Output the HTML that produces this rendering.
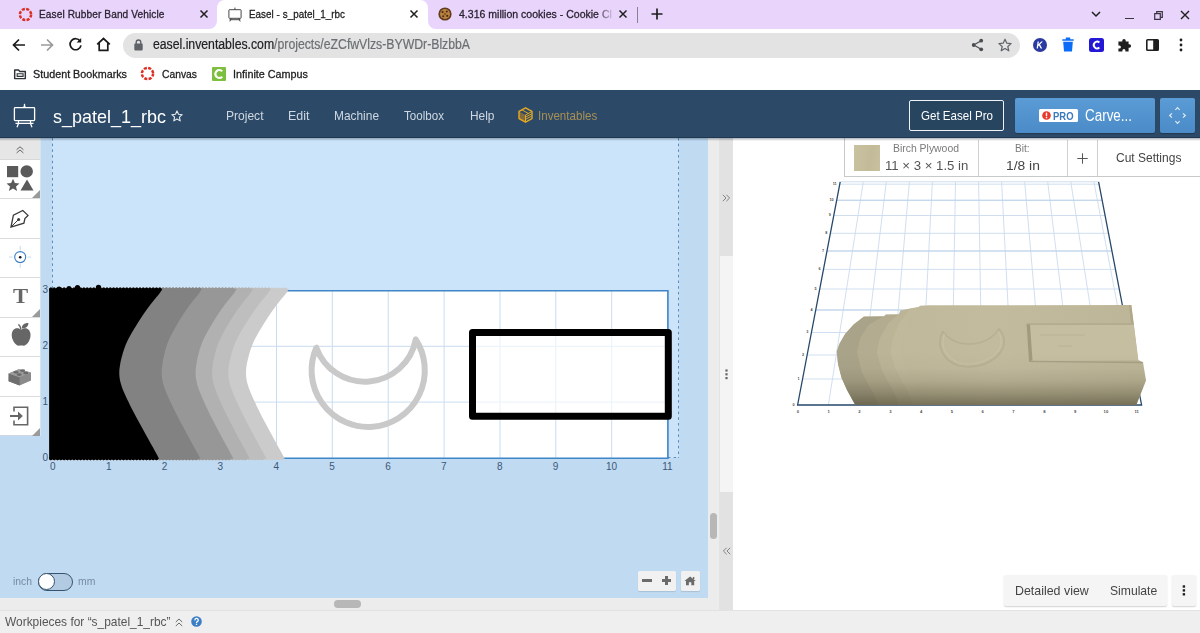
<!DOCTYPE html>
<html>
<head>
<meta charset="utf-8">
<title>Easel - s_patel_1_rbc</title>
<style>
*{box-sizing:border-box;margin:0;padding:0}
html,body{width:1200px;height:633px;overflow:hidden;background:#fff}
body{font-family:"Liberation Sans",sans-serif;position:relative;color:#222}
.abs{position:absolute}
.t{position:absolute;white-space:nowrap;line-height:1;transform-origin:0 0}
svg{position:absolute;overflow:visible}
/* chrome */
#tabstrip{left:0;top:0;width:1200px;height:29px;background:#e9d5fc}
#acttab{left:217px;top:0;width:211px;height:30px;background:#fff;border-radius:8px 8px 0 0}
#toolbar{left:0;top:29px;width:1200px;height:61px;background:#fff}
#omni{left:123px;top:33px;width:897px;height:25px;background:#e3e3e4;border-radius:13px}
/* app */
#hdr{left:0;top:90px;width:1200px;height:47.5px;background:#2c4a67;border-bottom:1px solid #1f3850}
#hdrsh{left:0;top:137.5px;width:1200px;height:3px;background:linear-gradient(rgba(20,40,60,0.35),rgba(20,40,60,0));z-index:5}
#work{left:0;top:138px;width:708px;height:460px;background:#c0daf1}
#inner{left:52px;top:138px;width:627px;height:320px;background:#cce4fa}
#lefttb{left:0;top:138px;width:40px;height:298px;background:#fff}
#vscroll{left:708px;top:138px;width:11px;height:460px;background:#ececec}
#hscroll{left:0;top:598px;width:720px;height:12.5px;background:#ececec}
#divider{left:719px;top:138px;width:13.9px;height:472px;background:#f4f4f4}
#right{left:732.9px;top:138px;width:467px;height:472px;background:#fff}
#bottom{left:0;top:610px;width:1200px;height:23px;background:#efefef;border-top:1px solid #e2e2e2}
.ax{font-size:10px;color:#3b5876}
</style>
</head>
<body>
<!-- ============ BROWSER CHROME ============ -->
<div id="tabstrip" class="abs"></div>
<div id="acttab" class="abs"></div>
<div id="toolbar" class="abs"></div>
<div id="omni" class="abs"></div>
<!-- tab 1 -->
<svg style="left:18px;top:7px" width="15" height="15" viewBox="0 0 15 15"><circle cx="7.5" cy="7.5" r="5.6" fill="none" stroke="#dc2e23" stroke-width="2.5" stroke-dasharray="3.05 1.35"/></svg>
<div class="t" id="tab1t" style="left:38.5px;-webkit-text-stroke:0.3px currentColor;top:8.5px;font-size:11.3px;color:#2a2230;letter-spacing:0.1px;transform:scaleX(0.8961)">Easel Rubber Band Vehicle</div>
<svg style="left:199px;top:9px" width="10" height="10" viewBox="0 0 10 10"><path d="M1.5 1.5L8.5 8.5M8.5 1.5L1.5 8.5" stroke="#1f1f1f" stroke-width="1.5" fill="none"/></svg>
<!-- active tab curves -->
<svg style="left:209px;top:21px" width="8" height="8" viewBox="0 0 8 8"><path d="M8 0V8H0A8 8 0 0 0 8 0Z" fill="#fff"/></svg>
<svg style="left:428px;top:21px" width="8" height="8" viewBox="0 0 8 8"><path d="M0 0V8H8A8 8 0 0 1 0 0Z" fill="#fff"/></svg>
<!-- tab 2 icon: easel -->
<svg style="left:228px;top:6.5px" width="14" height="15" viewBox="0 0 14 15"><rect x="0.9" y="2.7" width="12.2" height="8.6" rx="0.5" fill="none" stroke="#3d3d3d" stroke-width="0.95"/><path d="M6.9 0.6V2.6M1.6 12.7H12.3M3.2 11.4L1.8 14.4M10.8 11.4L12.2 14.4" stroke="#3d3d3d" stroke-width="0.95" fill="none"/></svg>
<div class="t" id="tab2t" style="left:249px;-webkit-text-stroke:0.3px currentColor;top:8.5px;font-size:11.3px;color:#222;letter-spacing:0.05px;transform:scaleX(0.8701)">Easel - s_patel_1_rbc</div>
<svg style="left:409px;top:9px" width="10" height="10" viewBox="0 0 10 10"><path d="M1.5 1.5L8.5 8.5M8.5 1.5L1.5 8.5" stroke="#1f1f1f" stroke-width="1.5" fill="none"/></svg>
<!-- tab 3 -->
<svg style="left:438px;top:7px" width="14" height="14" viewBox="0 0 14 14"><circle cx="7" cy="7" r="6.6" fill="#5e3b1c"/><circle cx="7" cy="7" r="5" fill="#b9813f"/><circle cx="4.6" cy="5" r="1.1" fill="#4a2a12"/><circle cx="8.8" cy="4.6" r="1" fill="#4a2a12"/><circle cx="9.2" cy="8.8" r="1.1" fill="#4a2a12"/><circle cx="5.2" cy="9.2" r="1" fill="#4a2a12"/><circle cx="7" cy="7" r="0.8" fill="#4a2a12"/></svg>
<div class="t" id="tab3t" style="-webkit-text-stroke:0.3px currentColor;left:459px;top:8.5px;font-size:11.3px;color:#2a2230;-webkit-mask-image:linear-gradient(90deg,#000 90%,rgba(0,0,0,0.15) 100%);transform:scaleX(0.9328)">4.316 million cookies - Cookie Cl</div>
<svg style="left:618px;top:9px" width="10" height="10" viewBox="0 0 10 10"><path d="M1.5 1.5L8.5 8.5M8.5 1.5L1.5 8.5" stroke="#1f1f1f" stroke-width="1.5" fill="none"/></svg>
<div class="abs" style="left:637px;top:7px;width:1px;height:16px;background:#8b7f96"></div>
<svg style="left:651px;top:8px" width="12" height="12" viewBox="0 0 12 12"><path d="M6 0.5V11.5M0.5 6H11.5" stroke="#1f1f1f" stroke-width="1.7" fill="none"/></svg>
<!-- window controls -->
<svg style="left:1091px;top:11px" width="10" height="6" viewBox="0 0 10 6"><path d="M1 1L5 5L9 1" stroke="#1f1f1f" stroke-width="1.5" fill="none"/></svg>
<div class="abs" style="left:1125px;top:18px;width:9px;height:1.3px;background:#3a3440"></div>
<svg style="left:1153.5px;top:11px" width="9" height="9" viewBox="0 0 9 9"><path d="M0.7 2.7H6.3V8.3H0.7Z" fill="none" stroke="#3a3440" stroke-width="1.2"/><path d="M2.7 2.7V0.7H8.3V6.3H6.3" fill="none" stroke="#3a3440" stroke-width="1.2"/></svg>
<svg style="left:1180px;top:10px" width="10" height="10" viewBox="0 0 10 10"><path d="M1 1L9 9M9 1L1 9" stroke="#1f1f1f" stroke-width="1.4" fill="none"/></svg>
<!-- nav buttons -->
<svg style="left:12px;top:38px" width="14" height="14" viewBox="0 0 14 14"><path d="M13 7H2M7 1.5L1.5 7L7 12.5" stroke="#1a1a1a" stroke-width="1.7" fill="none"/></svg>
<svg style="left:40px;top:38px" width="14" height="14" viewBox="0 0 14 14"><path d="M1 7H12M7 1.5L12.5 7L7 12.5" stroke="#9a9a9a" stroke-width="1.7" fill="none"/></svg>
<svg style="left:68px;top:37px" width="15" height="15" viewBox="0 0 15 15"><path d="M12.2 4.2A5.5 5.5 0 1 0 13 8.3" stroke="#1a1a1a" stroke-width="1.7" fill="none"/><path d="M13.2 1V5.6H8.6Z" fill="#1a1a1a"/></svg>
<svg style="left:96px;top:37px" width="15" height="15" viewBox="0 0 15 15"><path d="M1.2 7.3L7.5 1.5L13.8 7.3M3.2 6.3V13.3H11.8V6.3" stroke="#1a1a1a" stroke-width="1.7" fill="none" stroke-linejoin="miter"/></svg>
<!-- omnibox -->
<svg style="left:134px;top:39px" width="9" height="12" viewBox="0 0 9 12"><rect x="0.3" y="4.6" width="8.4" height="6.8" rx="0.8" fill="#5f6368"/><path d="M2.2 5V3.3A2.3 2.3 0 0 1 6.8 3.3V5" fill="none" stroke="#5f6368" stroke-width="1.4"/></svg>
<div class="t" id="url" style="-webkit-text-stroke:0.2px currentColor;left:153px;top:37px;font-size:14px;color:#202124;letter-spacing:-0.02px;transform:scaleX(0.8769)">easel.inventables.com<span style="color:#6b6f73">/projects/eZCfwVlzs-BYWDr-BlzbbA</span></div>
<svg style="left:971px;top:38px" width="13" height="14" viewBox="0 0 13 14"><circle cx="10.2" cy="2.7" r="1.9" fill="#4a4d51"/><circle cx="2.7" cy="7" r="1.9" fill="#4a4d51"/><circle cx="10.2" cy="11.3" r="1.9" fill="#4a4d51"/><path d="M2.7 7L10.2 2.7M2.7 7L10.2 11.3" stroke="#4a4d51" stroke-width="1.2"/></svg>
<svg style="left:998px;top:38px" width="14" height="14" viewBox="0 0 14 14"><path d="M7 1.2L8.8 5.2L13.1 5.6L9.8 8.5L10.8 12.8L7 10.5L3.2 12.8L4.2 8.5L0.9 5.6L5.2 5.2Z" fill="none" stroke="#5f6368" stroke-width="1.2" stroke-linejoin="round"/></svg>
<!-- extensions -->
<svg style="left:1033px;top:38px" width="14" height="14" viewBox="0 0 14 14"><circle cx="7" cy="7" r="7" fill="#2a3aa0"/><path d="M4.6 3.4L5.9 3.4L5.5 6.2L8.3 3.4H9.9L7 6.4L9.2 10.6H7.7L6 7.4L5.2 8.2L4.9 10.6H3.6Z" fill="#fff"/></svg>
<svg style="left:1062px;top:37px" width="12" height="15" viewBox="0 0 12 15"><path d="M0.3 2.2H11.7V3.8H0.3ZM3.8 0.6H8.2V2.2H3.8ZM1.2 4.8H10.8L10 14.5H2Z" fill="#0b6cf5"/></svg>
<svg style="left:1089px;top:38px" width="15" height="14" viewBox="0 0 15 14"><rect x="0" y="0" width="15" height="14" rx="2.5" fill="#2417d6"/><path d="M10.4 4.4A3.4 3.4 0 1 0 10.4 9.6" fill="none" stroke="#fff" stroke-width="1.9"/></svg>
<svg style="left:1117px;top:38px" width="15" height="15" viewBox="0 0 15 15"><path d="M5.3 2.6A1.7 1.7 0 0 1 8.7 2.6V3.4H11.6V6.3H12.4A1.7 1.7 0 0 1 12.4 9.7H11.6V13.6H8.4V12.6A1.5 1.5 0 0 0 5.4 12.6V13.6H1.4V10.4H2.4A1.5 1.5 0 0 0 2.4 7.4H1.4V3.4H5.3Z" fill="#1f1f1f"/></svg>
<svg style="left:1146px;top:39px" width="13" height="12" viewBox="0 0 13 12"><rect x="0.8" y="0.8" width="11.4" height="10.4" rx="0.8" fill="none" stroke="#1f1f1f" stroke-width="1.6"/><rect x="7.2" y="0.8" width="5" height="10.4" fill="#1f1f1f"/></svg>
<svg style="left:1179px;top:38px" width="4" height="14" viewBox="0 0 4 14"><circle cx="2" cy="2" r="1.4" fill="#1f1f1f"/><circle cx="2" cy="7" r="1.4" fill="#1f1f1f"/><circle cx="2" cy="12" r="1.4" fill="#1f1f1f"/></svg>
<!-- bookmarks -->
<svg style="left:13.5px;top:68.8px" width="12" height="10.3" viewBox="0 0 14 12"><path d="M0.8 1.2H5.3L6.6 2.8H13.2V11.2H0.8Z" fill="none" stroke="#2f3337" stroke-width="1.7" stroke-linejoin="round"/><path d="M3.7 5.6H10.6V8.6H3.7Z" fill="none" stroke="#2f3337" stroke-width="1.3"/></svg>
<div class="t" id="bm1" style="left:33px;-webkit-text-stroke:0.3px currentColor;top:68.5px;font-size:11.3px;color:#222;transform:scaleX(0.9534)">Student Bookmarks</div>
<svg style="left:140px;top:66px" width="15" height="15" viewBox="0 0 15 15"><circle cx="7.5" cy="7.5" r="5.6" fill="none" stroke="#dc2e23" stroke-width="2.5" stroke-dasharray="3.05 1.35"/></svg>
<div class="t" id="bm2" style="left:162px;-webkit-text-stroke:0.3px currentColor;top:68.5px;font-size:11.3px;color:#222;transform:scaleX(0.9135)">Canvas</div>
<svg style="left:212px;top:67px" width="14" height="14" viewBox="0 0 14 14"><rect width="14" height="14" rx="1" fill="#7fbf3f"/><path d="M10.2 4.2A4 4 0 1 0 10.2 9.8" fill="none" stroke="#fff" stroke-width="2.2"/></svg>
<div class="t" id="bm3" style="left:233px;-webkit-text-stroke:0.3px currentColor;top:68.5px;font-size:11.3px;color:#222;transform:scaleX(0.9554)">Infinite Campus</div>


<!-- ============ APP ============ -->
<div id="hdr" class="abs"></div>
<!-- logo -->
<svg style="left:13px;top:103px" width="23" height="25" viewBox="0 0 23 25"><path d="M11.5 0.8V4.5" stroke="#fff" stroke-width="1.3" fill="none"/><path d="M10.2 4.5L11.5 1L12.8 4.5" fill="#fff"/><rect x="1.4" y="4.6" width="20.2" height="13" rx="0.8" fill="none" stroke="#fff" stroke-width="1.3"/><path d="M2.5 20.3H20.5M5.6 20.3L4 24.3M17.4 20.3L19 24.3M5.5 17.6V20M17.5 17.6V20" stroke="#fff" stroke-width="1.25" fill="none"/></svg>
<div class="t" id="ttl" style="left:53px;top:108.2px;font-size:18.5px;color:#fff;transform:scaleX(0.9722)">s_patel_1_rbc</div>
<svg style="left:171px;top:110px" width="12" height="12" viewBox="0 0 12 12"><path d="M6 0.9L7.5 4.3L11.2 4.7L8.4 7.2L9.2 10.9L6 9L2.8 10.9L3.6 7.2L0.8 4.7L4.5 4.3Z" fill="none" stroke="#e8edf2" stroke-width="1.1" stroke-linejoin="round"/></svg>
<div class="t" id="m1" style="left:225.5px;top:109px;font-size:13.5px;color:#cfd8e2;transform:scaleX(0.8922)">Project</div>
<div class="t" id="m2" style="left:287.5px;top:109px;font-size:13.5px;color:#cfd8e2;transform:scaleX(0.9241)">Edit</div>
<div class="t" id="m3" style="left:334px;top:109px;font-size:13.5px;color:#cfd8e2;transform:scaleX(0.8818)">Machine</div>
<div class="t" id="m4" style="left:404px;top:109px;font-size:13.5px;color:#cfd8e2;transform:scaleX(0.8593)">Toolbox</div>
<div class="t" id="m5" style="left:469.5px;top:109px;font-size:13.5px;color:#cfd8e2;transform:scaleX(0.8824)">Help</div>
<svg style="left:518px;top:107px" width="15" height="16" viewBox="0 0 15 16"><path d="M1 4.4L7.5 8V15.2L1 11.6Z" fill="#9c7630" fill-opacity="0.75"/><path d="M7.5 0.8L14 4.4V11.6L7.5 15.2L1 11.6V4.4Z" fill="none" stroke="#e6a822" stroke-width="1.4" stroke-linejoin="round"/><path d="M4 2.9L10.4 6.5M7.5 8L13.6 4.7M7.5 10.2L13.6 6.9M7.5 12.4L13.6 9.1M7.5 8V15" stroke="#e6a822" stroke-width="1" fill="none"/></svg>
<div class="t" id="m6" style="left:537.8px;top:109px;font-size:13.5px;color:#a98f55;transform:scaleX(0.8572)">Inventables</div>
<!-- buttons -->
<div class="abs" style="left:908.5px;top:99.5px;width:95.5px;height:31px;border:1.3px solid #eef2f6;border-radius:2px;background:#284560"></div>
<div class="t" id="gep" style="left:920.5px;top:109px;font-size:13.5px;color:#fff;transform:scaleX(0.8567)">Get Easel Pro</div>
<div class="abs" style="left:1015px;top:98px;width:140px;height:34.5px;border-radius:2px;background:linear-gradient(#5b9cd6,#4a8bc8);box-shadow:0 1px 1px rgba(0,0,0,0.25)"></div>
<div class="abs" style="left:1038.5px;top:108.5px;width:39px;height:13.5px;background:#fff;border-radius:1.5px"></div>
<svg style="left:1041.5px;top:111px" width="9" height="9" viewBox="0 0 9 9"><circle cx="4.5" cy="4.5" r="4.3" fill="#e8392c"/><rect x="3.8" y="1.7" width="1.4" height="3.6" fill="#fff"/><rect x="3.8" y="6" width="1.4" height="1.3" fill="#fff"/></svg>
<div class="t" id="pro" style="left:1053px;top:110.5px;font-size:10.5px;color:#3b79bd;font-weight:bold;transform:scaleX(0.9005)">PRO</div>
<div class="t" id="carve" style="left:1084.5px;top:107.5px;font-size:16px;color:#fff;transform:scaleX(0.8391)">Carve...</div>
<div class="abs" style="left:1160px;top:98px;width:35px;height:34.5px;border-radius:2px;background:linear-gradient(#5b9cd6,#4a8bc8);box-shadow:0 1px 1px rgba(0,0,0,0.25)"></div>
<svg style="left:1168px;top:106px" width="19" height="19" viewBox="0 0 19 19"><path d="M7.3 4L9.5 1.6L11.7 4M7.3 15L9.5 17.4L11.7 15M4 7.3L1.6 9.5L4 11.7M15 7.3L17.4 9.5L15 11.7" stroke="#e6eff8" stroke-width="1.1" fill="none"/></svg>


<div id="work" class="abs"></div>
<div id="inner" class="abs"></div>
<!--WORK-START-->
<svg id="wsvg" style="left:0;top:0" width="1200" height="633" viewBox="0 0 1200 633">
<path d="M52.5 138V290M678.5 138V458M668 457.5H679" stroke="#4c80b8" stroke-width="0.9" stroke-dasharray="2.5 3.2" fill="none"/>
<rect x="53.0" y="290.4" width="614.6" height="167.6" fill="#fff"/>
<path d="M108.9 290.4V458.0M164.7 290.4V458.0M220.6 290.4V458.0M276.5 290.4V458.0M332.3 290.4V458.0M388.2 290.4V458.0M444.1 290.4V458.0M500.0 290.4V458.0M555.8 290.4V458.0M611.7 290.4V458.0M53.0 402.1H667.6M53.0 346.3H667.6" stroke="#c9ddf1" stroke-width="1" fill="none"/>
<path d="M53.0 290.7H667.9V458.3H53.0" stroke="#3f86c8" stroke-width="1.6" fill="none"/>
<path d="M49.2 288.8L288.8 288.8L287.8 290.8L286.5 292.8L285.0 294.8L283.3 296.8L281.6 298.8L280.0 300.8L278.4 302.8L276.8 304.8L275.3 306.8L273.9 308.8L272.4 310.8L271.0 312.8L269.7 314.8L268.3 316.8L267.0 318.8L265.8 320.8L264.5 322.8L263.2 324.8L262.0 326.8L260.8 328.8L259.6 330.8L258.4 332.8L257.3 334.8L256.2 336.8L255.1 338.8L254.1 340.8L253.2 342.8L252.4 344.8L251.6 346.8L250.9 348.8L250.2 350.8L249.6 352.8L249.0 354.8L248.5 356.8L248.0 358.8L247.5 360.8L247.1 362.8L246.7 364.8L246.4 366.8L246.2 368.8L246.0 370.8L246.0 372.8L246.0 374.8L246.2 376.8L246.4 378.8L246.8 380.8L247.2 382.8L247.8 384.8L248.4 386.8L249.1 388.8L249.9 390.8L250.7 392.8L251.5 394.8L252.4 396.8L253.3 398.8L254.2 400.8L255.2 402.8L256.1 404.8L257.0 406.8L258.0 408.8L259.0 410.8L260.0 412.8L261.0 414.8L262.0 416.8L263.1 418.8L264.1 420.8L265.2 422.8L266.3 424.8L267.4 426.8L268.4 428.8L269.5 430.8L270.6 432.8L271.7 434.8L272.8 436.8L273.8 438.8L274.9 440.8L276.0 442.8L277.1 444.8L278.2 446.8L279.3 448.8L280.4 450.8L281.5 452.8L282.6 454.8L283.7 456.8L284.7 458.8L49.2 459.0Z" fill="#cbcbcb"/>
<path d="M50.9 289.4H287.3M50.9 458.4H283.2" stroke="#cbcbcb" stroke-width="3.6" stroke-linecap="round" stroke-dasharray="0 3.3" fill="none"/>
<path d="M49.2 288.8L270.5 288.8L269.5 290.8L268.2 292.8L266.7 294.8L265.1 296.8L263.4 298.8L261.7 300.8L260.1 302.8L258.6 304.8L257.1 306.8L255.6 308.8L254.2 310.8L252.8 312.8L251.5 314.8L250.1 316.8L248.8 318.8L247.6 320.8L246.3 322.8L245.1 324.8L243.9 326.8L242.7 328.8L241.5 330.8L240.3 332.8L239.2 334.8L238.1 336.8L237.1 338.8L236.1 340.8L235.3 342.8L234.4 344.8L233.7 346.8L233.0 348.8L232.3 350.8L231.8 352.8L231.2 354.8L230.7 356.8L230.2 358.8L229.8 360.8L229.4 362.8L229.0 364.8L228.7 366.8L228.5 368.8L228.3 370.8L228.3 372.8L228.3 374.8L228.5 376.8L228.7 378.8L229.1 380.8L229.5 382.8L230.0 384.8L230.7 386.8L231.3 388.8L232.1 390.8L232.9 392.8L233.7 394.8L234.5 396.8L235.4 398.8L236.3 400.8L237.2 402.8L238.1 404.8L239.1 406.8L240.0 408.8L241.0 410.8L241.9 412.8L242.9 414.8L243.9 416.8L245.0 418.8L246.0 420.8L247.1 422.8L248.1 424.8L249.2 426.8L250.3 428.8L251.3 430.8L252.4 432.8L253.4 434.8L254.5 436.8L255.6 438.8L256.7 440.8L257.7 442.8L258.8 444.8L259.9 446.8L261.0 448.8L262.1 450.8L263.2 452.8L264.3 454.8L265.4 456.8L266.4 458.8L49.2 459.0Z" fill="#bebebe"/>
<path d="M50.9 289.4H269.0M50.9 458.4H264.9" stroke="#bebebe" stroke-width="3.6" stroke-linecap="round" stroke-dasharray="0 3.3" fill="none"/>
<path d="M49.2 288.8L253.0 288.8L252.0 290.8L250.7 292.8L249.2 294.8L247.6 296.8L245.9 298.8L244.3 300.8L242.7 302.8L241.2 304.8L239.7 306.8L238.2 308.8L236.8 310.8L235.5 312.8L234.1 314.8L232.8 316.8L231.6 318.8L230.3 320.8L229.1 322.8L227.9 324.8L226.7 326.8L225.6 328.8L224.4 330.8L223.3 332.8L222.3 334.8L221.2 336.8L220.3 338.8L219.3 340.8L218.5 342.8L217.7 344.8L217.0 346.8L216.4 348.8L215.8 350.8L215.3 352.8L214.8 354.8L214.3 356.8L213.8 358.8L213.4 360.8L213.1 362.8L212.8 364.8L212.5 366.8L212.3 368.8L212.1 370.8L212.1 372.8L212.1 374.8L212.3 376.8L212.5 378.8L212.9 380.8L213.3 382.8L213.8 384.8L214.4 386.8L215.1 388.8L215.8 390.8L216.6 392.8L217.4 394.8L218.2 396.8L219.1 398.8L220.0 400.8L220.9 402.8L221.8 404.8L222.7 406.8L223.6 408.8L224.5 410.8L225.5 412.8L226.5 414.8L227.5 416.8L228.5 418.8L229.5 420.8L230.6 422.8L231.6 424.8L232.7 426.8L233.7 428.8L234.8 430.8L235.8 432.8L236.9 434.8L238.0 436.8L239.0 438.8L240.1 440.8L241.2 442.8L242.3 444.8L243.4 446.8L244.5 448.8L245.6 450.8L246.6 452.8L247.7 454.8L248.8 456.8L249.8 458.8L49.2 459.0Z" fill="#b1b1b1"/>
<path d="M50.9 289.4H251.5M50.9 458.4H248.3" stroke="#b1b1b1" stroke-width="3.6" stroke-linecap="round" stroke-dasharray="0 3.3" fill="none"/>
<path d="M49.2 288.8L236.6 288.8L235.6 290.8L234.3 292.8L232.8 294.8L231.2 296.8L229.5 298.8L227.9 300.8L226.3 302.8L224.7 304.8L223.3 306.8L221.8 308.8L220.4 310.8L219.1 312.8L217.7 314.8L216.4 316.8L215.2 318.8L213.9 320.8L212.7 322.8L211.5 324.8L210.3 326.8L209.2 328.8L208.0 330.8L206.9 332.8L205.8 334.8L204.8 336.8L203.8 338.8L202.9 340.8L202.0 342.8L201.3 344.8L200.6 346.8L199.9 348.8L199.3 350.8L198.8 352.8L198.3 354.8L197.8 356.8L197.4 358.8L197.0 360.8L196.6 362.8L196.3 364.8L196.0 366.8L195.8 368.8L195.6 370.8L195.6 372.8L195.6 374.8L195.8 376.8L196.0 378.8L196.4 380.8L196.8 382.8L197.3 384.8L197.9 386.8L198.6 388.8L199.3 390.8L200.1 392.8L200.9 394.8L201.8 396.8L202.6 398.8L203.5 400.8L204.4 402.8L205.3 404.8L206.2 406.8L207.2 408.8L208.1 410.8L209.1 412.8L210.0 414.8L211.0 416.8L212.1 418.8L213.1 420.8L214.1 422.8L215.2 424.8L216.2 426.8L217.3 428.8L218.4 430.8L219.4 432.8L220.5 434.8L221.5 436.8L222.6 438.8L223.7 440.8L224.8 442.8L225.9 444.8L227.0 446.8L228.1 448.8L229.2 450.8L230.2 452.8L231.3 454.8L232.4 456.8L233.4 458.8L49.2 459.0Z" fill="#979797"/>
<path d="M50.9 289.4H235.1M50.9 458.4H231.9" stroke="#979797" stroke-width="3.6" stroke-linecap="round" stroke-dasharray="0 3.3" fill="none"/>
<path d="M49.2 288.8L201.7 288.8L200.7 290.8L199.5 292.8L198.0 294.8L196.3 296.8L194.7 298.8L193.0 300.8L191.4 302.8L189.9 304.8L188.4 306.8L187.0 308.8L185.6 310.8L184.3 312.8L183.0 314.8L181.7 316.8L180.4 318.8L179.2 320.8L178.0 322.8L176.9 324.8L175.7 326.8L174.6 328.8L173.5 330.8L172.4 332.8L171.3 334.8L170.3 336.8L169.4 338.8L168.5 340.8L167.7 342.8L167.0 344.8L166.3 346.8L165.7 348.8L165.2 350.8L164.7 352.8L164.2 354.8L163.8 356.8L163.3 358.8L163.0 360.8L162.6 362.8L162.3 364.8L162.1 366.8L161.9 368.8L161.7 370.8L161.7 372.8L161.7 374.8L161.9 376.8L162.1 378.8L162.5 380.8L162.9 382.8L163.5 384.8L164.1 386.8L164.8 388.8L165.6 390.8L166.4 392.8L167.2 394.8L168.1 396.8L169.0 398.8L169.9 400.8L170.9 402.8L171.8 404.8L172.7 406.8L173.7 408.8L174.7 410.8L175.7 412.8L176.7 414.8L177.7 416.8L178.8 418.8L179.8 420.8L180.9 422.8L182.0 424.8L183.1 426.8L184.1 428.8L185.2 430.8L186.3 432.8L187.4 434.8L188.5 436.8L189.5 438.8L190.6 440.8L191.7 442.8L192.8 444.8L193.9 446.8L195.0 448.8L196.1 450.8L197.2 452.8L198.3 454.8L199.4 456.8L200.4 458.8L49.2 459.0Z" fill="#828282"/>
<path d="M50.9 289.4H200.2M50.9 458.4H198.9" stroke="#828282" stroke-width="3.6" stroke-linecap="round" stroke-dasharray="0 3.3" fill="none"/>
<path d="M49.2 288.8L162.3 288.8L161.3 290.8L160.0 292.8L158.5 294.8L156.8 296.8L155.1 298.8L153.5 300.8L151.9 302.8L150.3 304.8L148.8 306.8L147.3 308.8L145.9 310.8L144.5 312.8L143.1 314.8L141.8 316.8L140.5 318.8L139.2 320.8L137.9 322.8L136.7 324.8L135.5 326.8L134.2 328.8L133.0 330.8L131.8 332.8L130.7 334.8L129.6 336.8L128.5 338.8L127.5 340.8L126.6 342.8L125.7 344.8L125.0 346.8L124.2 348.8L123.6 350.8L122.9 352.8L122.4 354.8L121.8 356.8L121.3 358.8L120.8 360.8L120.4 362.8L120.1 364.8L119.8 366.8L119.5 368.8L119.3 370.8L119.3 372.8L119.3 374.8L119.5 376.8L119.7 378.8L120.1 380.8L120.6 382.8L121.2 384.8L121.8 386.8L122.5 388.8L123.3 390.8L124.2 392.8L125.1 394.8L126.0 396.8L126.9 398.8L127.9 400.8L128.9 402.8L129.8 404.8L130.8 406.8L131.8 408.8L132.9 410.8L133.9 412.8L135.0 414.8L136.0 416.8L137.1 418.8L138.2 420.8L139.3 422.8L140.4 424.8L141.5 426.8L142.6 428.8L143.7 430.8L144.8 432.8L145.9 434.8L147.0 436.8L148.1 438.8L149.2 440.8L150.3 442.8L151.4 444.8L152.6 446.8L153.7 448.8L154.8 450.8L155.9 452.8L157.0 454.8L158.0 456.8L159.1 458.8L49.2 459.0Z" fill="#000"/>
<path d="M50.9 289.4H160.8M50.9 458.4H157.6" stroke="#000" stroke-width="3.6" stroke-linecap="round" stroke-dasharray="0 3.3" fill="none"/>
<circle cx="69" cy="288.3" r="2.3"/><circle cx="77.5" cy="287.6" r="2.6"/><circle cx="98.5" cy="287.4" r="2.7"/><circle cx="59" cy="288.6" r="2.2"/>
<path d="M316.3 347.7A56.6 56.6 0 1 0 415.7 339.5A51.7 51.7 0 0 1 316.3 347.7Z" fill="none" stroke="#c9c9c9" stroke-width="6" stroke-linejoin="round"/>
<rect x="472.5" y="332.5" width="195.8" height="83.7" fill="#fff" fill-opacity="0.6" stroke="#000" stroke-width="7" stroke-linejoin="round"/>
</svg>
<div class="t ax" style="left:42.8px;top:462.3px;width:20px;text-align:center">0</div>
<div class="t ax" style="left:98.7px;top:462.3px;width:20px;text-align:center">1</div>
<div class="t ax" style="left:154.5px;top:462.3px;width:20px;text-align:center">2</div>
<div class="t ax" style="left:210.4px;top:462.3px;width:20px;text-align:center">3</div>
<div class="t ax" style="left:266.3px;top:462.3px;width:20px;text-align:center">4</div>
<div class="t ax" style="left:322.1px;top:462.3px;width:20px;text-align:center">5</div>
<div class="t ax" style="left:378.0px;top:462.3px;width:20px;text-align:center">6</div>
<div class="t ax" style="left:433.9px;top:462.3px;width:20px;text-align:center">7</div>
<div class="t ax" style="left:489.8px;top:462.3px;width:20px;text-align:center">8</div>
<div class="t ax" style="left:545.6px;top:462.3px;width:20px;text-align:center">9</div>
<div class="t ax" style="left:601.5px;top:462.3px;width:20px;text-align:center">10</div>
<div class="t ax" style="left:657.4px;top:462.3px;width:20px;text-align:center">11</div>
<div class="t ax" style="left:36px;top:452.5px;width:12px;text-align:right">0</div>
<div class="t ax" style="left:36px;top:396.6px;width:12px;text-align:right">1</div>
<div class="t ax" style="left:36px;top:340.8px;width:12px;text-align:right">2</div>
<div class="t ax" style="left:36px;top:284.9px;width:12px;text-align:right">3</div>
<!--WORK-END-->
<div id="lefttb" class="abs"></div>
<div class="abs" style="left:0;top:138px;width:40px;height:20.7px;background:#e6e6e6"></div>
<div class="abs" style="left:40px;top:138px;width:1px;height:298px;background:#d3e4f4"></div>
<div class="abs" style="left:0;top:158.5px;width:40px;height:1px;background:#d8d8d8"></div>
<div class="abs" style="left:0;top:198px;width:40px;height:1px;background:#dcdcdc"></div>
<div class="abs" style="left:0;top:237.5px;width:40px;height:1px;background:#dcdcdc"></div>
<div class="abs" style="left:0;top:277px;width:40px;height:1px;background:#dcdcdc"></div>
<div class="abs" style="left:0;top:316.5px;width:40px;height:1px;background:#dcdcdc"></div>
<div class="abs" style="left:0;top:356px;width:40px;height:1px;background:#dcdcdc"></div>
<div class="abs" style="left:0;top:395.5px;width:40px;height:1px;background:#dcdcdc"></div>
<div class="abs" style="left:0;top:435px;width:40px;height:1px;background:#cfd8e0"></div>
<!-- chevrons up -->
<svg style="left:16px;top:145.5px" width="8" height="8" viewBox="0 0 8 8"><path d="M0.6 3.7L4 0.8L7.4 3.7M0.6 6.9L4 4L7.4 6.9" stroke="#555" stroke-width="0.9" fill="none"/></svg>
<!-- shapes -->
<svg style="left:0;top:159px" width="40" height="39" viewBox="0 0 40 39"><rect x="7" y="7" width="11.2" height="11.2" fill="#5a5a5a"/><circle cx="26.7" cy="12.4" r="6.2" fill="#5a5a5a"/><path d="M13 19.8L14.9 24.1L19.5 24.5L16 27.5L17.1 32L13 29.6L8.9 32L10 27.5L6.5 24.5L11.1 24.1Z" fill="#5a5a5a"/><path d="M27 20.6L33.5 31.5H20.5Z" fill="#5a5a5a"/><path d="M40 31V39H32Z" fill="#9a9a9a"/></svg>
<!-- pen -->
<svg style="left:0;top:198px" width="40" height="40" viewBox="0 198 40 40"><path d="M11 227L13.4 215.2L22.8 210.5L28 215.4L24.9 218.6L23.9 223.2Z" fill="none" stroke="#3a3a3a" stroke-width="1.3" stroke-linejoin="miter"/><path d="M11.2 226.8L18 220" stroke="#3a3a3a" stroke-width="1"/><circle cx="18.6" cy="219.5" r="1.5" fill="#3a3a3a"/></svg>
<!-- target -->
<svg style="left:0;top:238px" width="40" height="39" viewBox="0 238 40 39"><path d="M20.2 246V250.2M20.2 264V267.8M9 257.1H12.6M27.6 257.1H31.2" stroke="#c3d8ee" stroke-width="1"/><circle cx="20.2" cy="257.1" r="5.5" fill="none" stroke="#3f7fc4" stroke-width="1.1"/><circle cx="20.2" cy="257.2" r="1.3" fill="#111"/></svg>
<!-- T -->
<div class="t" style="left:12.5px;top:286px;font-family:'Liberation Serif',serif;font-weight:bold;font-size:21px;color:#666;transform:scaleX(1.08)">T</div>
<svg style="left:32px;top:308.5px" width="8" height="8" viewBox="0 0 8 8"><path d="M8 0V8H0Z" fill="#9a9a9a"/></svg>
<!-- apple -->
<svg style="left:11px;top:322px" width="21" height="25" viewBox="0 0 21 25"><path d="M10.2 7.8C8.2 6.2 5 5.6 2.8 7.6C0 10.2 0.2 15.4 2.6 19.4C4.2 22.2 6.6 24.2 8.6 23.6C9.6 23.3 10.6 23.3 11.6 23.6C13.6 24.2 16.2 22.2 17.8 19.4C20.2 15.4 20.2 10.2 17.4 7.6C15.2 5.6 12.2 6.2 10.2 7.8Z" fill="#666"/><path d="M10.6 6.4C10.8 3 13.4 0.8 17.4 1C17.4 4.6 14.6 6.8 10.6 6.4Z" fill="#666"/><path d="M9.8 7.2C9.6 5 8.8 3.4 7.4 2.4" stroke="#666" stroke-width="1.3" fill="none"/></svg>
<!-- lego -->
<svg style="left:8px;top:367px" width="24" height="19" viewBox="0 0 24 19"><path d="M0.6 6.4L10.6 2.2L23 5.4V13.6L11.6 18.4L0.6 14.2Z" fill="#8a8a8a"/><path d="M0.6 6.4L11.6 10.2V18.4L0.6 14.2Z" fill="#6e6e6e"/><path d="M0.6 6.4L10.6 2.2L23 5.4L11.6 10.2Z" fill="#9c9c9c"/><ellipse cx="8" cy="5.2" rx="2.6" ry="1.3" fill="#6a6a6a"/><ellipse cx="14.6" cy="3.6" rx="2.6" ry="1.3" fill="#6a6a6a"/><ellipse cx="11.2" cy="7.6" rx="2.6" ry="1.3" fill="#6a6a6a"/><ellipse cx="17.8" cy="6" rx="2.6" ry="1.3" fill="#6a6a6a"/></svg>
<!-- import -->
<svg style="left:9px;top:406px" width="20" height="20" viewBox="0 0 20 20"><path d="M5 5.4V1.2H18.6V18.8H5V14.6" fill="none" stroke="#666" stroke-width="1.6"/><path d="M1 10H12" stroke="#666" stroke-width="2"/><path d="M9 5.6L13.8 10L9 14.4Z" fill="#666"/></svg>
<svg style="left:32px;top:427.5px" width="8" height="8" viewBox="0 0 8 8"><path d="M8 0V8H0Z" fill="#9a9a9a"/></svg>

<div id="vscroll" class="abs"></div>
<div id="hscroll" class="abs"></div>
<div id="divider" class="abs"></div>
<div id="right" class="abs"></div>
<div class="abs" style="left:843.8px;top:138px;width:357px;height:38.5px;background:#fff;border-left:1px solid #c9c9c9;border-bottom:1px solid #c9c9c9"></div>
<div class="abs" style="left:854px;top:144.5px;width:25.8px;height:26px;background:linear-gradient(100deg,#c9c2a1,#c3bb98 60%,#c8c09e)"></div>
<div class="t" id="mt1" style="left:893.4px;top:142.8px;font-size:10.5px;color:#7a7a7a;transform:scaleX(0.9920)">Birch Plywood</div>
<div class="t" id="mt2" style="left:885px;top:158.5px;font-size:13.5px;color:#555;transform:scaleX(0.9774)">11 × 3 × 1.5 in</div>
<div class="abs" style="left:978px;top:140px;width:1px;height:36px;background:#d0d0d0"></div>
<div class="t" id="mt3" style="left:1015px;top:142.8px;font-size:10.5px;color:#7a7a7a;transform:scaleX(0.9623)">Bit:</div>
<div class="t" id="mt4" style="left:1005.6px;top:158.5px;font-size:13.5px;color:#444;transform:scaleX(1.0263)">1/8 in</div>
<div class="abs" style="left:1067px;top:140px;width:1px;height:36px;background:#d0d0d0"></div>
<svg style="left:1077px;top:153px" width="11" height="11" viewBox="0 0 11 11"><path d="M5.5 0.3V10.7M0.3 5.5H10.7" stroke="#555" stroke-width="1" fill="none"/></svg>
<div class="abs" style="left:1097px;top:140px;width:1px;height:36px;background:#d0d0d0"></div>
<div class="t" id="mt5" style="left:1116px;top:151.5px;font-size:12.5px;color:#444;transform:scaleX(0.9604)">Cut Settings</div>
<svg id="p3d" style="left:0;top:0" width="1200" height="633" viewBox="0 0 1200 633">
<defs><linearGradient id="fr" x1="0" y1="0" x2="0" y2="1"><stop offset="0" stop-color="#4a452f" stop-opacity="0"/><stop offset="0.3" stop-color="#4a452f" stop-opacity="0.03"/><stop offset="0.55" stop-color="#4a452f" stop-opacity="0.14"/><stop offset="0.78" stop-color="#4a452f" stop-opacity="0.36"/><stop offset="1" stop-color="#4a452f" stop-opacity="0.62"/></linearGradient><linearGradient id="topg" x1="0" y1="0" x2="1" y2="0"><stop offset="0" stop-color="#bdb698"/><stop offset="0.5" stop-color="#c2bb9e"/><stop offset="1" stop-color="#bcb597"/></linearGradient><clipPath id="body"><path id="sil" d="M836.8 351.6L839.5 343.5L845 334L853.5 324.5L863.9 316.5L884 316.2L885.7 314.6L898.7 314.3L900.4 310.6L908.3 309L909.6 308.6L918.7 307L920 305.7L929 305.3L1131.4 305L1133.8 324L1138.3 360L1143 362.3L1146 380.4L1136.3 405H855.3L847 390L841.6 378L838 364Z"/></clipPath></defs>
<path d="M863.3 181.8L828.4 405.0M886.3 181.8L859.2 405.0M909.4 181.8L890.0 405.0M932.4 181.8L920.8 405.0M955.5 181.8L951.6 405.0M978.6 181.8L982.4 405.0M1001.6 181.8L1013.2 405.0M1024.7 181.8L1044.0 405.0M1047.7 181.8L1074.8 405.0M1070.8 181.8L1105.6 405.0M1093.9 181.8L1136.4 405.0M802.6 379.0H1136.6M807.1 355.0H1132.0M811.4 332.5H1127.6M815.7 310.0H1123.3M819.7 289.0H1119.3M823.5 269.4H1115.5M827.0 251.0H1111.9M830.4 233.3H1108.5M833.8 215.5H1105.1M836.7 200.3H1102.2M839.7 184.2H1099.1M840.2 181.8H1098.6" stroke="#cbdbee" stroke-width="0.9" fill="none"/>
<path d="M827.0 251.0H1111.9M836.7 200.3H1102.2M815.7 310.0H1123.3" stroke="#bfd3ea" stroke-width="1.1" fill="none"/>
<path d="M840.2 181.8L797.6 405.0H1141.6L1098.6 181.8" stroke="#27486a" stroke-width="1.3" fill="none"/>
<text x="797.9" y="412.6" font-size="4.2" font-weight="bold" font-family="Liberation Sans, sans-serif" fill="#1a1a1a" fill-opacity="0.85" text-anchor="middle">0</text>
<text x="828.7" y="412.6" font-size="4.2" font-weight="bold" font-family="Liberation Sans, sans-serif" fill="#1a1a1a" fill-opacity="0.85" text-anchor="middle">1</text>
<text x="859.5" y="412.6" font-size="4.2" font-weight="bold" font-family="Liberation Sans, sans-serif" fill="#1a1a1a" fill-opacity="0.85" text-anchor="middle">2</text>
<text x="890.3" y="412.6" font-size="4.2" font-weight="bold" font-family="Liberation Sans, sans-serif" fill="#1a1a1a" fill-opacity="0.85" text-anchor="middle">3</text>
<text x="921.1" y="412.6" font-size="4.2" font-weight="bold" font-family="Liberation Sans, sans-serif" fill="#1a1a1a" fill-opacity="0.85" text-anchor="middle">4</text>
<text x="951.9" y="412.6" font-size="4.2" font-weight="bold" font-family="Liberation Sans, sans-serif" fill="#1a1a1a" fill-opacity="0.85" text-anchor="middle">5</text>
<text x="982.7" y="412.6" font-size="4.2" font-weight="bold" font-family="Liberation Sans, sans-serif" fill="#1a1a1a" fill-opacity="0.85" text-anchor="middle">6</text>
<text x="1013.5" y="412.6" font-size="4.2" font-weight="bold" font-family="Liberation Sans, sans-serif" fill="#1a1a1a" fill-opacity="0.85" text-anchor="middle">7</text>
<text x="1044.3" y="412.6" font-size="4.2" font-weight="bold" font-family="Liberation Sans, sans-serif" fill="#1a1a1a" fill-opacity="0.85" text-anchor="middle">8</text>
<text x="1075.1" y="412.6" font-size="4.2" font-weight="bold" font-family="Liberation Sans, sans-serif" fill="#1a1a1a" fill-opacity="0.85" text-anchor="middle">9</text>
<text x="1105.9" y="412.6" font-size="4.2" font-weight="bold" font-family="Liberation Sans, sans-serif" fill="#1a1a1a" fill-opacity="0.85" text-anchor="middle">10</text>
<text x="1136.7" y="412.6" font-size="4.2" font-weight="bold" font-family="Liberation Sans, sans-serif" fill="#1a1a1a" fill-opacity="0.85" text-anchor="middle">11</text>
<text x="794.6" y="405.5" font-size="3.8" font-weight="bold" font-family="Liberation Sans, sans-serif" fill="#1a1a1a" fill-opacity="0.85" text-anchor="end">0</text>
<text x="799.6" y="379.5" font-size="3.8" font-weight="bold" font-family="Liberation Sans, sans-serif" fill="#1a1a1a" fill-opacity="0.85" text-anchor="end">1</text>
<text x="804.1" y="355.5" font-size="3.8" font-weight="bold" font-family="Liberation Sans, sans-serif" fill="#1a1a1a" fill-opacity="0.85" text-anchor="end">2</text>
<text x="808.4" y="333.0" font-size="3.8" font-weight="bold" font-family="Liberation Sans, sans-serif" fill="#1a1a1a" fill-opacity="0.85" text-anchor="end">3</text>
<text x="812.7" y="310.5" font-size="3.8" font-weight="bold" font-family="Liberation Sans, sans-serif" fill="#1a1a1a" fill-opacity="0.85" text-anchor="end">4</text>
<text x="816.7" y="289.5" font-size="3.8" font-weight="bold" font-family="Liberation Sans, sans-serif" fill="#1a1a1a" fill-opacity="0.85" text-anchor="end">5</text>
<text x="820.5" y="269.9" font-size="3.8" font-weight="bold" font-family="Liberation Sans, sans-serif" fill="#1a1a1a" fill-opacity="0.85" text-anchor="end">6</text>
<text x="824.0" y="251.5" font-size="3.8" font-weight="bold" font-family="Liberation Sans, sans-serif" fill="#1a1a1a" fill-opacity="0.85" text-anchor="end">7</text>
<text x="827.4" y="233.8" font-size="3.8" font-weight="bold" font-family="Liberation Sans, sans-serif" fill="#1a1a1a" fill-opacity="0.85" text-anchor="end">8</text>
<text x="830.8" y="216.0" font-size="3.8" font-weight="bold" font-family="Liberation Sans, sans-serif" fill="#1a1a1a" fill-opacity="0.85" text-anchor="end">9</text>
<text x="833.7" y="200.8" font-size="3.8" font-weight="bold" font-family="Liberation Sans, sans-serif" fill="#1a1a1a" fill-opacity="0.85" text-anchor="end">10</text>
<text x="836.7" y="184.7" font-size="3.8" font-weight="bold" font-family="Liberation Sans, sans-serif" fill="#1a1a1a" fill-opacity="0.85" text-anchor="end">11</text>
<use href="#sil" fill="url(#topg)"/>
<g clip-path="url(#body)">
<path d="M830 351.6L839.5 343.5L845 334L853.5 324.5L863.9 316.5L884 316.2L869 325L860.5 338L857.5 352L862 372L876 398L880 410H840Z" fill="#a9a389"/>
<path d="M884 316.2L885.7 314.6L898.7 314.3L900 313L889 323L880 338L877 352L882 370L896 396L900 410H880L876 398L862 372L857.5 352L860.5 338L869 325Z" fill="#b3ac90"/>
<path d="M900 313L900.4 310.6L908.3 309L910.4 308.8L900 322L893 338L890.5 352L895 368L908 392L915 410H900L896 396L882 370L877 352L880 338L889 323Z" fill="#bbb497"/>
<path d="M910.4 308.8L918.7 307L919.6 306.5L909 322L903 338L901 352L905 367L918 390L925 410H915L908 392L895 368L890.5 352L893 338L900 322Z" fill="#c0b99c"/>
<path d="M942.7 331.3C936 345 942 360 958 365.5C975 370 996 363 1003 348C1005.5 341 1003.5 334 999 328.6" fill="none" stroke="#a9a183" stroke-width="1.8" stroke-opacity="0.38"/>
<path d="M942.7 331.3C950 341 960 344.5 971 344C984 343 994 337 999 328.6" fill="none" stroke="#a9a183" stroke-width="1.6" stroke-opacity="0.38"/>
<path d="M944.5 334C940 346 946 358 959 362.8C974 366.5 993 360.5 1000 347.5C1002 342 1001 337 998.5 332" fill="none" stroke="#d2cbab" stroke-width="1.3" stroke-opacity="0.4"/>
<path d="M1026.6 323.9H1133.8L1138.3 360L1029 361Z" fill="#c5bea1"/>
<path d="M1026.6 323.9L1030 324.5L1032.5 360.5L1029 361Z" fill="#a19a7d"/>
<path d="M1026.6 324.2H1134" stroke="#a8a083" stroke-width="1.3" stroke-opacity="0.8"/>
<path d="M1029 361.3L1143 362.5" stroke="#a29b80" stroke-width="1.3" stroke-opacity="0.85"/>
<path d="M1040 335H1085M1058 346H1072" stroke="#b0a888" stroke-width="0.8" stroke-opacity="0.7"/>
<path d="M1131.4 305L1133.8 324L1131 324L1129 305Z" fill="#b0a888"/>
<rect x="820" y="352" width="340" height="53" fill="url(#fr)"/>
</g>
</svg>
<div class="abs" style="left:1003.8px;top:575px;width:163.7px;height:31px;background:#f5f5f5;border-radius:2px;box-shadow:0 1px 1.5px rgba(0,0,0,0.18)"></div>
<div class="t" id="br1" style="left:1015px;top:583.5px;font-size:13px;color:#444;transform:scaleX(0.9537)">Detailed view</div>
<div class="t" id="br2" style="left:1109.5px;top:583.5px;font-size:13px;color:#444;transform:scaleX(0.9342)">Simulate</div>
<div class="abs" style="left:1172px;top:575px;width:24px;height:31px;background:#f5f5f5;border-radius:2px;box-shadow:0 1px 1.5px rgba(0,0,0,0.18)"></div>
<svg style="left:1182px;top:585px" width="4" height="11" viewBox="0 0 4 11"><rect x="0.7" y="0.3" width="2.4" height="2.4" fill="#222"/><rect x="0.7" y="4.2" width="2.4" height="2.4" fill="#222"/><rect x="0.7" y="8.1" width="2.4" height="2.4" fill="#222"/></svg>
<div id="bottom" class="abs"></div>
<!-- divider segments -->
<div class="abs" style="left:719px;top:138px;width:1px;height:472px;background:#e3e3e3"></div>
<div class="abs" style="left:719.5px;top:138px;width:13.4px;height:118px;background:#e2e2e2"></div>
<div class="abs" style="left:719.5px;top:492px;width:13.4px;height:118.5px;background:#e2e2e2"></div>
<svg style="left:722px;top:193.5px" width="8" height="8" viewBox="0 0 8 8"><path d="M0.8 0.8L4 4L0.8 7.2M4.4 0.8L7.6 4L4.4 7.2" stroke="#777" stroke-width="0.9" fill="none"/></svg>
<svg style="left:725px;top:369px" width="3" height="11" viewBox="0 0 3 11"><rect x="0.4" y="0.4" width="2.2" height="2.2" fill="#666"/><rect x="0.4" y="4.2" width="2.2" height="2.2" fill="#666"/><rect x="0.4" y="8" width="2.2" height="2.2" fill="#666"/></svg>
<svg style="left:722.5px;top:547px" width="8" height="8" viewBox="0 0 8 8"><path d="M3.6 0.8L0.4 4L3.6 7.2M7.2 0.8L4 4L7.2 7.2" stroke="#777" stroke-width="0.9" fill="none"/></svg>
<!-- scroll thumbs -->
<div class="abs" style="left:710.3px;top:512.7px;width:7px;height:26.3px;background:#b7b7b7;border-radius:3.5px"></div>
<div class="abs" style="left:334.3px;top:600.2px;width:26.7px;height:7.4px;background:#b7b7b7;border-radius:3.7px"></div>
<!-- unit toggle -->
<div class="t" id="inch" style="left:13.3px;top:575.6px;font-size:11px;color:#768ca2;transform:scaleX(0.9412)">inch</div>
<div class="abs" style="left:37.8px;top:572.8px;width:35px;height:18px;border:1px solid #35536f;border-radius:9px;background:#b3cbe2"></div>
<div class="abs" style="left:38.3px;top:573.3px;width:17px;height:17px;border:1px solid #35536f;border-radius:50%;background:#fff"></div>
<div class="t" id="mm" style="left:78.3px;top:575.6px;font-size:11px;color:#768ca2;transform:scaleX(0.9494)">mm</div>
<!-- zoom buttons -->
<div class="abs" style="left:637.7px;top:571px;width:38.5px;height:19.7px;background:#f1f1f1;border-radius:1.5px;box-shadow:0 1px 1px rgba(0,0,0,0.12)"></div>
<div class="abs" style="left:641.7px;top:579.3px;width:10.6px;height:2.6px;background:#6b6b6b"></div>
<div class="abs" style="left:661.6px;top:579.3px;width:9.6px;height:2.6px;background:#6b6b6b"></div>
<div class="abs" style="left:665.1px;top:575.8px;width:2.6px;height:9.6px;background:#6b6b6b"></div>
<div class="abs" style="left:680.7px;top:571px;width:19.3px;height:19.7px;background:#f1f1f1;border-radius:1.5px;box-shadow:0 1px 1px rgba(0,0,0,0.12)"></div>
<svg style="left:684.2px;top:575.8px" width="12.2" height="9.6" viewBox="0 0 11 10" preserveAspectRatio="none"><path d="M5.5 0.6L10.6 5.2H9.2V9.6H6.6V6.6H4.4V9.6H1.8V5.2H0.4Z" fill="#6b6b6b"/><rect x="8" y="1" width="1.3" height="2.4" fill="#6b6b6b"/></svg>
<!-- workpieces -->
<div class="t" id="wp" style="left:4.5px;top:614.5px;font-size:13.5px;color:#555;transform:scaleX(0.8834)">Workpieces for “s_patel_1_rbc”</div>
<svg style="left:175px;top:617.5px" width="8" height="9" viewBox="0 0 8 9"><path d="M0.8 4L4 1L7.2 4M0.8 8L4 5L7.2 8" stroke="#6a6a6a" stroke-width="1" fill="none"/></svg>
<svg style="left:191px;top:616.4px" width="11" height="11" viewBox="0 0 11 11"><circle cx="5.5" cy="5.5" r="5.3" fill="#3a7fc6"/><path d="M3.9 4.3A1.7 1.7 0 1 1 6.3 5.6C5.7 6 5.5 6.2 5.5 6.9" stroke="#fff" stroke-width="1.3" fill="none"/><rect x="4.85" y="7.7" width="1.3" height="1.3" fill="#fff"/></svg>

<div id="hdrsh" class="abs"></div>
</body>
</html>
